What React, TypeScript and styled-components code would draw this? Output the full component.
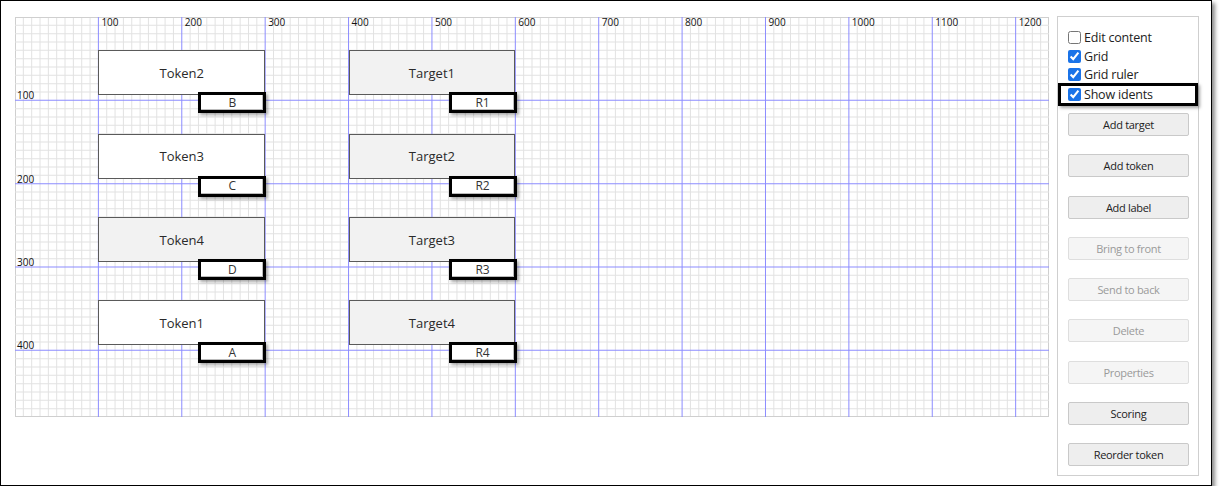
import React from "react";
import styled, { createGlobalStyle } from "styled-components";

const GlobalStyle = createGlobalStyle`
  html, body { margin: 0; padding: 0; background: #fff; }
  body { font-family: "Open Sans", "Liberation Sans", sans-serif; color: #222; }
  * { box-sizing: border-box; }
`;

const UNITS_W = 1240;
const UNITS_H = 480;
const CANVAS_W = 1034;
const CANVAS_H = 400;
const SX = CANVAS_W / UNITS_W;
const SY = CANVAS_H / UNITS_H;

const Frame = styled.div`
  width: 1212px;
  height: 486px;
  border: 1px solid #000;
  box-shadow: 3px 3px 4px rgba(0, 0, 0, 0.45);
  display: flex;
  align-items: flex-start;
  gap: 8px;
  padding: 15px 0 0 13px;
  background: #fff;
`;

const Canvas = styled.div`
  position: relative;
  width: ${CANVAS_W}px;
  height: ${CANVAS_H}px;
  margin: 1px 0 0 1px;
  flex: none;
`;

const GridSvg = styled.svg`
  display: block;
  width: ${CANVAS_W}px;
  height: ${CANVAS_H}px;
`;

const RulerLabel = styled.span<{ $x: number; $y: number }>`
  position: absolute;
  left: ${(p) => p.$x}px;
  top: ${(p) => p.$y}px;
  font-size: 10px;
  line-height: 10px;
  color: #111;
  white-space: nowrap;
`;

const Box = styled.div<{ $x: number; $y: number; $fill: string }>`
  position: absolute;
  left: ${(p) => p.$x * SX}px;
  top: ${(p) => p.$y * SY}px;
  width: ${200 * SX}px;
  height: ${54 * SY}px;
  background: ${(p) => p.$fill};
  border: 1px solid #5a5a5a;
  display: flex;
  align-items: center;
  justify-content: center;
  font-size: 13px;
  color: #2a2a2a;
`;

const Ident = styled.div`
  position: absolute;
  left: 99px;
  top: 41px;
  width: 68px;
  height: 21px;
  border: 3px solid #000;
  background: #fff;
  box-shadow: 2px 2px 3px rgba(0, 0, 0, 0.35), inset -1px -1px 0 #bbb;
  display: flex;
  align-items: center;
  justify-content: center;
  font-size: 12px;
  line-height: 1;
  color: #333;
  z-index: 2;
`;

const Panel = styled.div`
  width: 142px;
  height: 460px;
  flex: none;
  border: 1px solid #cfcfcf;
  display: flex;
  flex-direction: column;
  padding-top: 11px;
`;

const CheckRow = styled.label<{ $h: number }>`
  display: flex;
  align-items: center;
  height: ${(p) => p.$h}px;
  padding-left: 10px;
  font-size: 12.5px;
  color: #222;
  letter-spacing: -0.2px;
`;

const Highlight = styled.div`
  height: 23px;
  border: 3px solid #000;
  box-shadow: 2px 2px 3px rgba(0, 0, 0, 0.35);
  display: flex;
  align-items: center;
  padding-left: 7px;
  font-size: 12.5px;
  color: #222;
  letter-spacing: -0.2px;
`;

const Check = styled.input`
  width: 13px;
  height: 13px;
  margin: 0 3px 0 0;
  accent-color: #1a73e8;
`;

const Buttons = styled.div`
  display: flex;
  flex-direction: column;
  gap: 18.25px;
  padding: 7px 0 0 10px;
`;

const Btn = styled.button<{ $disabled?: boolean }>`
  width: 121px;
  height: 23px;
  padding: 0;
  border: 1px solid ${(p) => (p.$disabled ? "#dedede" : "#c9c9c9")};
  border-radius: 2px;
  background: ${(p) => (p.$disabled ? "#f5f5f5" : "#eeeeee")};
  color: ${(p) => (p.$disabled ? "#9a9a9a" : "#222")};
  font-family: "Open Sans", "Liberation Sans", sans-serif;
  font-size: 11px;
  letter-spacing: -0.3px;
`;

function Grid() {
  const minor: React.ReactNode[] = [];
  const major: React.ReactNode[] = [];
  for (let x = 0; x <= UNITS_W; x += 10) {
    if (x % 100 === 0 && x > 0 && x < UNITS_W) {
      major.push(<line key={"vx" + x} x1={x} y1={0} x2={x} y2={UNITS_H} stroke="#8c8cff" strokeWidth={1.2} />);
    } else {
      const edge = x === 0 || x === UNITS_W;
      minor.push(<line key={"mx" + x} x1={x} y1={0} x2={x} y2={UNITS_H} stroke={edge ? "#cfcfcf" : "#e2e2e2"} strokeWidth={edge ? 2.4 : 1.2} />);
    }
  }
  for (let y = 0; y <= UNITS_H; y += 10) {
    if (y % 100 === 0 && y > 0 && y < UNITS_H) {
      major.push(<line key={"hy" + y} x1={0} y1={y} x2={UNITS_W} y2={y} stroke="#8c8cff" strokeWidth={1.2} />);
    } else {
      const edge = y === 0 || y === UNITS_H;
      minor.push(<line key={"my" + y} x1={0} y1={y} x2={UNITS_W} y2={y} stroke={edge ? "#cfcfcf" : "#e2e2e2"} strokeWidth={edge ? 2.4 : 1.2} />);
    }
  }
  return (
    <GridSvg viewBox={`0 0 ${UNITS_W} ${UNITS_H}`} preserveAspectRatio="none">
      <rect x={0} y={0} width={UNITS_W} height={UNITS_H} fill="#fff" />
      {minor}
      {major}
    </GridSvg>
  );
}

const xLabels = [100, 200, 300, 400, 500, 600, 700, 800, 900, 1000, 1100, 1200];
const yLabels = [100, 200, 300, 400];

const tokens = [
  { name: "Token2", id: "B", y: 40, fill: "#fff" },
  { name: "Token3", id: "C", y: 140, fill: "#fff" },
  { name: "Token4", id: "D", y: 240, fill: "#f2f2f2" },
  { name: "Token1", id: "A", y: 340, fill: "#fff" },
];
const targets = [
  { name: "Target1", id: "R1", y: 40 },
  { name: "Target2", id: "R2", y: 140 },
  { name: "Target3", id: "R3", y: 240 },
  { name: "Target4", id: "R4", y: 340 },
];

const buttons = [
  { label: "Add target" },
  { label: "Add token" },
  { label: "Add label" },
  { label: "Bring to front", disabled: true },
  { label: "Send to back", disabled: true },
  { label: "Delete", disabled: true },
  { label: "Properties", disabled: true },
  { label: "Scoring" },
  { label: "Reorder token" },
];

export default function App() {
  return (
    <>
      <GlobalStyle />
      <Frame>
        <Canvas>
          <Grid />
          {xLabels.map((x) => (
            <RulerLabel key={"x" + x} $x={x * SX + 3} $y={0}>
              {x}
            </RulerLabel>
          ))}
          {yLabels.map((y) => (
            <RulerLabel key={"y" + y} $x={2} $y={y * SY - 10}>
              {y}
            </RulerLabel>
          ))}
          {tokens.map((t) => (
            <Box key={t.name} $x={100} $y={t.y} $fill={t.fill}>
              {t.name}
              <Ident>{t.id}</Ident>
            </Box>
          ))}
          {targets.map((t) => (
            <Box key={t.name} $x={400} $y={t.y} $fill="#f2f2f2">
              {t.name}
              <Ident>{t.id}</Ident>
            </Box>
          ))}
        </Canvas>
        <Panel>
          <CheckRow $h={19}>
            <Check type="checkbox" />
            Edit content
          </CheckRow>
          <CheckRow $h={19}>
            <Check type="checkbox" defaultChecked />
            Grid
          </CheckRow>
          <CheckRow $h={17}>
            <Check type="checkbox" defaultChecked />
            Grid ruler
          </CheckRow>
          <Highlight>
            <Check type="checkbox" defaultChecked />
            Show idents
          </Highlight>
          <Buttons>
            {buttons.map((b) => (
              <Btn key={b.label} $disabled={b.disabled} disabled={b.disabled}>
                {b.label}
              </Btn>
            ))}
          </Buttons>
        </Panel>
      </Frame>
    </>
  );
}
